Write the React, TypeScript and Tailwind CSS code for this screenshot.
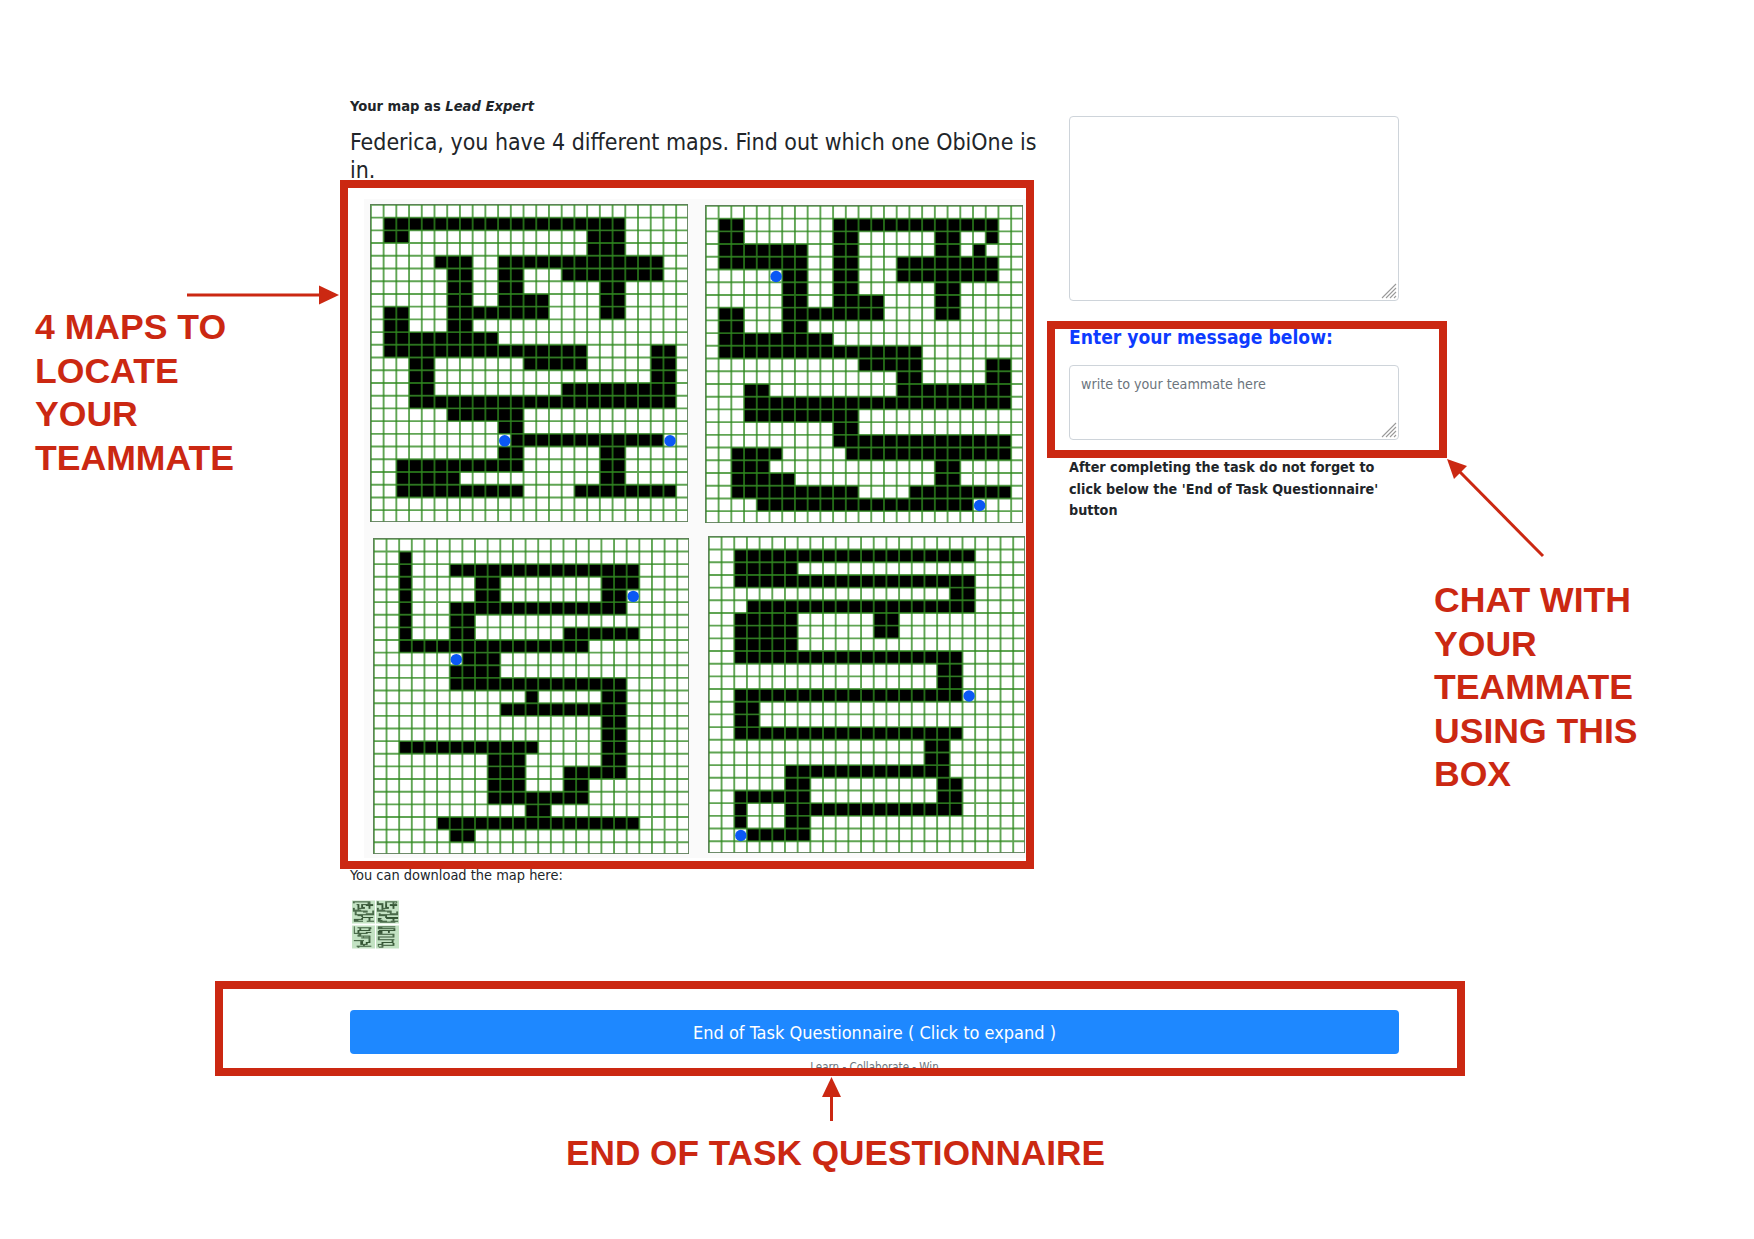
import React from 'react';

interface MapData {
  rows: string[];
  dots: [number, number][];
}

// each row lists its black runs of cells, dots are [col, row]
const MAPS: MapData[] = [
  {
    rows: ['', '1-19', '1-2 17-19', '17-19', '5-7 10-22', '6-7 10-11 15-22', '6-7 10-11 18-19', '6-7 10-13 18-19', '1-2 6-13 18-19', '1-2 6-7', '1-9', '1-16 22-23', '3-4 12-16 22-23', '3-4 22-23', '3-4 15-23', '3-23', '6-11', '10-11', '11-22', '10-11 18-19', '2-11 18-19', '2-6 18-19', '2-11 16-23', '', ''],
    dots: [[10, 18], [23, 18]],
  },
  {
    rows: ['', '1-2 10-22', '1-2 10-11 18-19 22-22', '1-7 10-11 18-19 21-21', '1-7 10-11 15-22', '6-7 10-11 15-22', '6-7 10-11 18-19', '6-7 10-13 18-19', '1-2 6-13 18-19', '1-2 6-7', '1-9', '1-16', '12-16 22-23', '15-16 22-23', '3-4 15-23', '3-23', '3-11', '10-11', '10-23', '2-5 11-23', '2-4 18-19', '2-6 18-19', '2-11 16-23', '4-20', ''],
    dots: [[5, 5], [21, 23]],
  },
  {
    rows: ['', '2-2', '2-2 6-20', '2-2 8-9 18-20', '2-2 8-9 18-19', '2-2 6-19', '2-2 6-7', '2-2 6-7 15-20', '2-16', '7-9', '6-9', '6-19', '12-12 18-19', '10-19', '18-19', '18-19', '2-12 18-19', '9-11 18-19', '9-11 15-19', '9-11 15-16', '9-16', '12-13', '5-20', '6-7', ''],
    dots: [[20, 4], [6, 9]],
  },
  {
    rows: ['', '2-20', '2-6', '2-20', '19-20', '3-20', '2-6 13-14', '2-6 13-14', '2-6', '2-19', '18-19', '18-19', '2-19', '2-3', '2-3', '2-19', '17-18', '17-18', '6-18', '6-7 18-19', '2-7 18-19', '2-2 6-19', '2-2 6-7', '3-7', ''],
    dots: [[20, 12], [2, 23]],
  },
];

const GRID_LINES = Array.from({ length: 26 }, (_, i) => i);

const cellsOf = (rows: string[]) =>
  rows.flatMap((row, y) =>
    row
      .split(' ')
      .filter(Boolean)
      .map((run) => {
        const [from, to] = run.split('-').map(Number);
        return { x: from, y, w: to - from + 1 };
      })
  );

const MapGrid: React.FC<{ map: MapData; size: number; className?: string }> = ({ map, size, className }) => (
  <svg width={size} height={size} viewBox="0 0 25 25" className={`block shrink-0 ${className ?? ''}`}>
    <rect width="25" height="25" fill="#ffffff" />
    <g transform="translate(0.07 0.07)">
      {cellsOf(map.rows).map((c) => (
        <rect key={`${c.x}-${c.y}`} x={c.x} y={c.y} width={c.w} height="1" fill="#000000" />
      ))}
      {GRID_LINES.map((i) => (
        <g key={i} stroke="#2f8a1f" strokeWidth="0.15" opacity="0.76">
          <line x1={i} y1="0" x2={i} y2="25" />
          <line x1="0" y1={i} x2="25" y2={i} />
        </g>
      ))}
      {map.dots.map(([x, y]) => (
        <circle key={`${x}-${y}`} cx={x + 0.52} cy={y + 0.55} r="0.45" fill="#0a57f5" />
      ))}
    </g>
    <rect x="0" y="0" width="25" height="25" fill="none" stroke="#5d7d58" strokeWidth="0.14" />
  </svg>
);

const Thumb: React.FC<{ map: MapData }> = ({ map }) => (
  <svg width="23" height="24" viewBox="0 0 25 25" className="block">
    <rect width="25" height="25" fill="#c3e2c3" />
    {cellsOf(map.rows).map((c) => (
      <rect key={`${c.x}-${c.y}`} x={c.x} y={c.y} width={c.w} height="1" fill="#2a4a2a" />
    ))}
  </svg>
);

const ResizeGrip = () => (
  <svg width="16" height="16" viewBox="0 0 16 16" className="pointer-events-none absolute bottom-[2px] right-[2px]">
    <g stroke="#9a9a9a" strokeWidth="1.1">
      <line x1="1" y1="15" x2="15" y2="1" />
      <line x1="5" y1="15" x2="15" y2="5" />
      <line x1="9" y1="15" x2="15" y2="9" />
      <line x1="13" y1="15" x2="15" y2="13" />
    </g>
  </svg>
);

export default function App() {
  return (
    <div className="relative h-[1239px] w-[1754px] overflow-hidden bg-white font-['DejaVu_Sans_Condensed','DejaVu_Sans',sans-serif] text-[#212529]">
      <div className="ml-[350px] w-[1049px] pt-[97px]">
        <div className="flex justify-between">
          {/* Map column */}
          <div className="w-[690px]">
            <p className="text-[14.6px] font-bold leading-[18px]">
              Your map as <em>Lead Expert</em>
            </p>
            <p className="mt-[13px] text-[22.95px] leading-[28px]">
              Federica, you have 4 different maps. Find out which one ObiOne is in.
            </p>

            <div className="ml-[14px] mt-[15px] h-[659px] w-[662px] bg-[#fafafa] pl-[6px] pt-[5px]">
              <div className="flex items-start gap-[17px]">
                <MapGrid map={MAPS[0]} size={318} />
                <MapGrid map={MAPS[1]} size={318} className="mt-[1px]" />
              </div>
              <div className="mt-[13px] flex items-start gap-[19px] pl-[3px]">
                <MapGrid map={MAPS[2]} size={316} className="mt-[2px]" />
                <MapGrid map={MAPS[3]} size={317} />
              </div>
            </div>

            <p className="mt-[8px] text-[14.45px] leading-[18px]">You can download the map here:</p>
            <div className="ml-[2px] mt-[16px] grid w-[47px] grid-cols-2 gap-[1px]">
              {MAPS.map((m, i) => (
                <Thumb key={i} map={m} />
              ))}
            </div>
          </div>

          {/* Chat column */}
          <div className="w-[330px]">
            <div className="relative mt-[19px]">
              <textarea className="block h-[185px] w-full resize-none rounded border border-[#ced4da] bg-white" />
              <ResizeGrip />
            </div>
            <h3 className="mt-[25px] text-[19.1px] font-bold leading-[24px] text-[#0d3bff]">Enter your message below:</h3>
            <div className="relative mt-[15px]">
              <textarea
                placeholder="write to your teammate here"
                className="block h-[75px] w-full resize-none rounded border border-[#ced4da] bg-white px-[11px] pb-[6px] pt-[8px] text-[14.2px] placeholder:text-[#6c757d]"
              />
              <ResizeGrip />
            </div>
            <p className="mt-[17px] text-[14.25px] font-bold leading-[21.7px]">
              After completing the task do not forget to click below the 'End of Task Questionnaire' button
            </p>
          </div>
        </div>

        <button className="mt-[61px] block h-[44px] w-full rounded bg-[#1e88ff] text-[18px] text-white">
          End of Task Questionnaire ( Click to expand )
        </button>
        <p className="mt-[6px] text-center text-[11.5px] leading-[14px] text-[#6c757d]">Learn - Collaborate - Win</p>
      </div>

      {/* Annotations laid over the page */}
      <div className="absolute left-[340px] top-[180px] h-[689px] w-[694px] border-[8px] border-[#cb2812]" />
      <div className="absolute left-[1047px] top-[321px] h-[137px] w-[400px] border-[8px] border-[#cb2812]" />
      <div className="absolute left-[215px] top-[981px] h-[95px] w-[1250px] border-[8px] border-[#cb2812]" />

      <svg width="1754" height="1239" viewBox="0 0 1754 1239" className="pointer-events-none absolute left-0 top-0">
        <g fill="#cb2812" stroke="none">
          <rect x="187" y="293.5" width="135" height="3" />
          <polygon points="339,295 319,285.5 319,304.5" />
          <polygon points="1447,459 1454,479 1467,466" />
          <line x1="1543" y1="556" x2="1460" y2="472" stroke="#cb2812" strokeWidth="3" />
          <rect x="830" y="1094" width="3" height="27" />
          <polygon points="831.5,1077 822,1097 841,1097" />
        </g>
      </svg>

      <div className="absolute left-[35px] top-[306px] font-['Liberation_Sans',sans-serif] text-[35.6px] font-bold leading-[43.6px] text-[#cb2812]">
        4 MAPS TO<br />LOCATE<br />YOUR<br />TEAMMATE
      </div>
      <div className="absolute left-[1434px] top-[579px] font-['Liberation_Sans',sans-serif] text-[35.6px] font-bold leading-[43.6px] text-[#cb2812]">
        CHAT WITH<br />YOUR<br />TEAMMATE<br />USING THIS<br />BOX
      </div>
      <div className="absolute left-[566px] top-[1131px] font-['Liberation_Sans',sans-serif] text-[35.2px] font-bold leading-[44px] text-[#cb2812]">
        END OF TASK QUESTIONNAIRE
      </div>
    </div>
  );
}
